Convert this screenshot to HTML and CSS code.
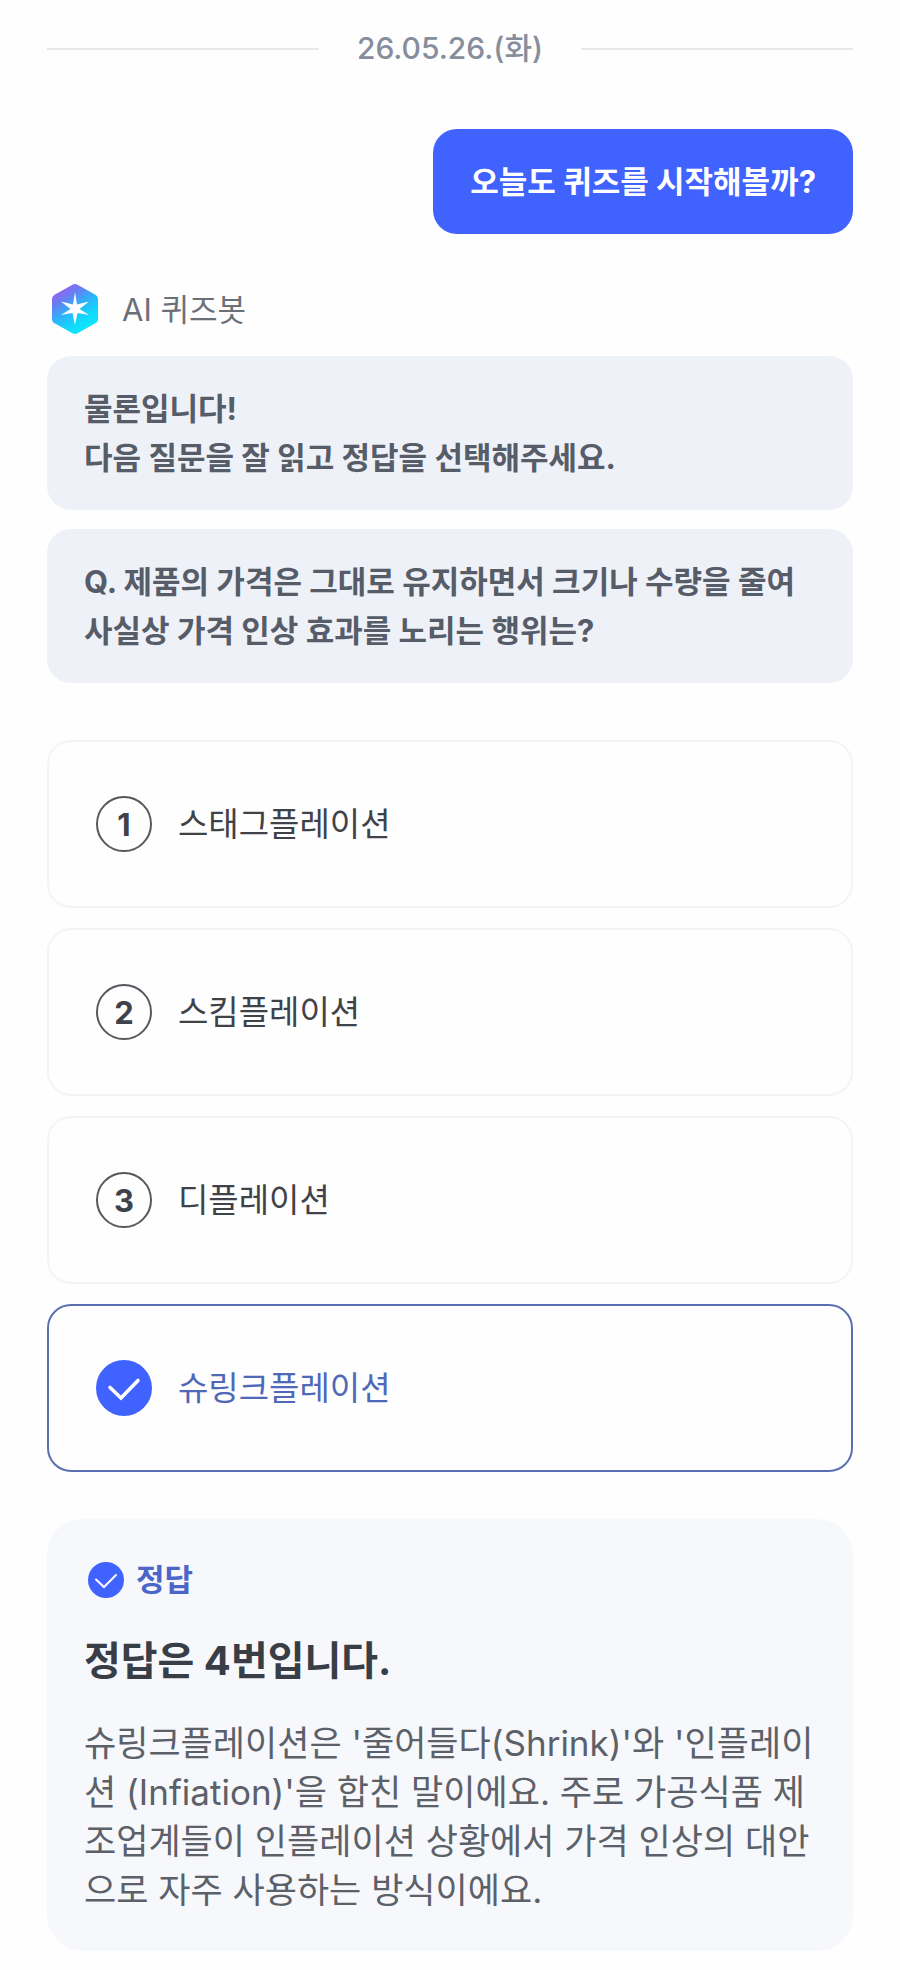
FILE: index.html
```html
<!DOCTYPE html>
<html lang="ko">
<head>
    <meta charset="UTF-8">
    <meta name="viewport" content="width=device-width, initial-scale=1.0">
    <title>AI 퀴즈봇</title>
    <link rel="stylesheet" href="styles.css">
</head>
<body>

    <main class="chat">
        <div class="date-divider">
            <time datetime="2026-05-26">26.05.26.(화)</time>
        </div>

        <p class="bubble user">오늘도 퀴즈를 시작해볼까?</p>

        <div class="bot-name">
            <svg class="bot-logo" viewBox="0 0 46 50" aria-hidden="true">
                <defs>
                    <linearGradient id="logo-fill" x1="0.15" y1="0.05" x2="0.7" y2="0.95">
                        <stop offset="0" stop-color="#a05cf0"/>
                        <stop offset="0.25" stop-color="#6a7cf2"/>
                        <stop offset="0.5" stop-color="#2fb0fa"/>
                        <stop offset="0.8" stop-color="#0fdcfc"/>
                        <stop offset="1" stop-color="#12e6fb"/>
                    </linearGradient>
                </defs>
                <path fill="url(#logo-fill)" d="M20 1Q23 -1 26 1L43 10.500Q46 12 46 15.500V35Q46 38 43 39.500L26 49Q23 51 20 49L3 39.500Q0 38 0 35V15.500Q0 12 3 10.500Z"/>
                <path fill="#fff" d="M23 8L25 20.500L37 17.500L27.500 25L37 31L25.500 29L23 41L20.500 29L9 31L18.500 25L9 17.500L21 20.500Z"/>
            </svg>
            <span>AI 퀴즈봇</span>
        </div>

        <div class="bot-messages">
            <p class="bubble bot">물론입니다!<br>다음 질문을 잘 읽고 정답을 선택해주세요.</p>
            <p class="bubble bot" id="question">Q. 제품의 가격은 그대로 유지하면서 크기나 수량을 줄여 사실상 가격 인상 효과를 노리는 행위는?</p>
        </div>

        <form class="options" role="radiogroup" aria-labelledby="question">
            <label class="option" for="answer-1">
                <span class="mark">
                    <input type="radio" name="answer" id="answer-1" value="1">
                    <span class="number">1</span>
                </span>
                <span>스태그플레이션</span>
            </label>
            <label class="option" for="answer-2">
                <span class="mark">
                    <input type="radio" name="answer" id="answer-2" value="2">
                    <span class="number">2</span>
                </span>
                <span>스킴플레이션</span>
            </label>
            <label class="option" for="answer-3">
                <span class="mark">
                    <input type="radio" name="answer" id="answer-3" value="3">
                    <span class="number">3</span>
                </span>
                <span>디플레이션</span>
            </label>
            <label class="option selected" for="answer-4">
                <span class="mark">
                    <input type="radio" name="answer" id="answer-4" value="4" checked>
                    <svg class="check" viewBox="0 0 56 56" aria-hidden="true">
                        <path d="M14 27.500L25 38L42 20.500" fill="none" stroke="#fff" stroke-width="3.600" stroke-linecap="round"/>
                    </svg>
                </span>
                <span>슈링크플레이션</span>
            </label>
        </form>

        <section class="result">
            <div class="result-label">
                <svg class="result-icon" viewBox="0 0 36 36" aria-hidden="true">
                    <circle cx="18" cy="18" r="18" fill="#4062ff"/>
                    <path d="M8 17.500L16 25L28 13" fill="none" stroke="#fff" stroke-width="2" stroke-linecap="round"/>
                </svg>
                <span>정답</span>
            </div>
            <h2>정답은 4번입니다.</h2>
            <p>슈링크플레이션은 '줄어들다(Shrink)'와 '인플레이션 (Infiation)'을 합친 말이에요. 주로 가공식품 제조업계들이 인플레이션 상황에서 가격 인상의 대안으로 자주 사용하는 방식이에요.</p>
        </section>
    </main>

</body>
</html>
```
FILE: styles.css
```css
* {
    box-sizing: border-box;
}
body {
    margin: 0;
    background: #fefefe;
    color: #3f4248;
    font-family: Inter, "Noto Sans CJK KR", sans-serif;
    font-size: 31px;
    line-height: 49px;
}
p, h2 {
    margin: 0;
}
.chat {
    display: flex;
    flex-direction: column;
    padding: 24px 47px 18px;
}
.date-divider {
    display: flex;
    align-items: center;
    gap: 38px;
    color: #868d9b;
    font-size: 30px;
    font-weight: 500;
}
.date-divider::before,
.date-divider::after {
    content: "";
    flex: 1;
    height: 2px;
    background: #e6e9eb;
}
.bubble {
    padding: 28px 37px;
    border-radius: 24px;
    font-weight: 700;
}
.user {
    align-self: flex-end;
    margin-top: 56px;
    background: #4062ff;
    color: #fff;
}
.bot-name {
    display: flex;
    align-items: center;
    gap: 24px;
    margin: 50px 5px 22px;
    color: #6b7078;
}
.bot-logo {
    width: 46px;
    height: 50px;
}
.bot-messages {
    display: grid;
    gap: 19px;
}
.bot {
    background: #eef1f7;
    color: #565c68;
}
.options {
    display: grid;
    gap: 20px;
    margin-top: 57px;
}
.option {
    display: flex;
    align-items: center;
    gap: 26px;
    padding: 54px 47px;
    border: 2px solid #f3f4f5;
    border-radius: 24px;
    font-size: 33px;
}
.selected {
    border-color: #5b70b0;
    color: #4f68b8;
}
.mark {
    display: grid;
    place-items: center;
}
.mark > * {
    grid-area: 1 / 1;
}
.mark input {
    appearance: none;
    width: 56px;
    height: 56px;
    margin: 0;
    border: 2px solid #55585d;
    border-radius: 50%;
}
.mark input:checked {
    border-color: #4062ff;
    background: #4062ff;
}
.number {
    font-size: 31px;
    font-weight: 700;
}
.check {
    width: 56px;
    height: 56px;
}
.result {
    margin-top: 47px;
    padding: 36px 37px;
    border-radius: 36px;
    background: #f6f8fc;
}
.result-label {
    display: flex;
    align-items: center;
    gap: 12px;
    padding-left: 4px;
    color: #4b65c8;
    font-weight: 700;
}
.result-icon {
    width: 36px;
    height: 36px;
}
.result h2 {
    margin: 32px 0 34px;
    color: #393d46;
    font-size: 40px;
}
.result p {
    color: #5b6069;
    font-size: 35px;
}
```
